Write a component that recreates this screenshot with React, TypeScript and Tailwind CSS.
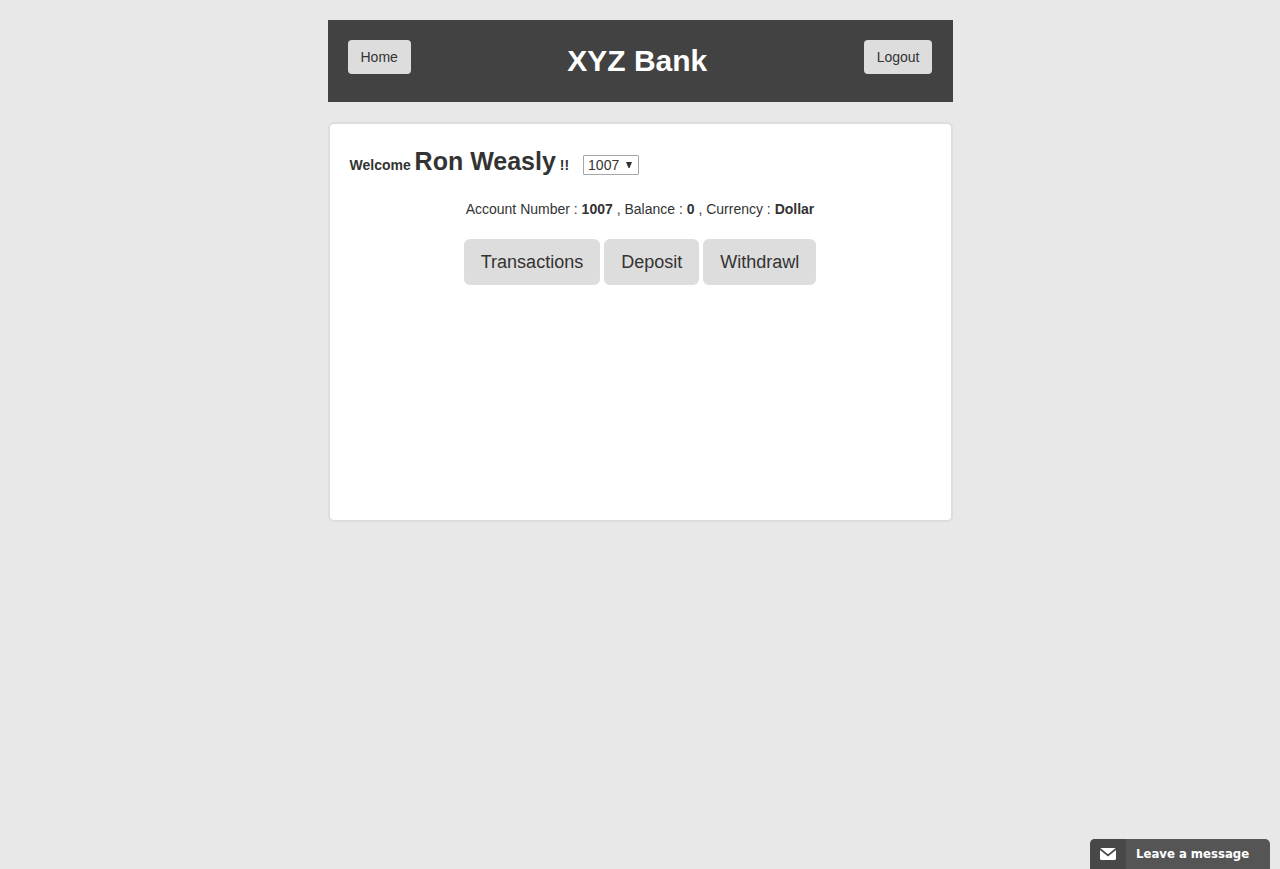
const actions = ['Transactions', 'Deposit', 'Withdrawl'];

function Header() {
  return (
    <header className="flex items-start justify-between bg-[#424242] p-5">
      <button type="button" className="h-[34px] rounded-sm bg-[#ddd] px-[13px] text-sm">
        Home
      </button>
      <h1 className="text-[30px] leading-[42px] font-bold text-white">XYZ Bank</h1>
      <button type="button" className="h-[34px] rounded-sm bg-[#ddd] px-[13px] text-sm">
        Logout
      </button>
    </header>
  );
}

function AccountSelect() {
  return (
    <span className="relative ml-[14px] inline-flex items-center">
      <select
        aria-label="Account number"
        defaultValue="1007"
        className="h-5 w-14 appearance-none rounded-[1px] border border-[#a6a6a6] bg-white pl-1 text-sm leading-4"
      >
        <option>1007</option>
        <option>1008</option>
        <option>1009</option>
      </select>
      <svg
        viewBox="0 0 6 6"
        className="pointer-events-none absolute right-[7px] h-1.5 w-1.5 fill-[#333]"
        aria-hidden="true"
      >
        <path d="M0 0h6L3.5 6h-1z" />
      </svg>
    </span>
  );
}

function Account() {
  return (
    <main className="mt-5 min-h-[400px] rounded-md border-2 border-[#ddd] bg-white p-5 text-sm">
      <div className="flex h-[34px] items-baseline font-bold">
        <p className="leading-[34px]">
          Welcome <span className="text-[25px]">Ron Weasly</span> !!
        </p>
        <span className="font-normal">
          <AccountSelect />
        </span>
      </div>
      <p className="mt-[21px] text-center leading-5">
        Account Number : <strong>1007</strong> , Balance : <strong>0</strong> , Currency :{' '}
        <strong>Dollar</strong>
      </p>
      <div className="mt-5 flex flex-wrap justify-center gap-1">
        {actions.map((label) => (
          <button
            key={label}
            type="button"
            className="h-[46px] rounded-md bg-[#ddd] px-[17px] text-lg"
          >
            {label}
          </button>
        ))}
      </div>
    </main>
  );
}

function MessageButton() {
  return (
    <button
      type="button"
      className="fixed right-2.5 bottom-0 flex h-[30px] w-[180px] items-center overflow-hidden rounded-t-[5px] bg-[#555] text-white"
    >
      <span className="flex h-full w-9 items-center justify-center bg-[#484848]">
        <svg viewBox="0 0 16 12" className="h-3 w-4" aria-hidden="true">
          <rect width="16" height="12" rx="1.5" fill="#fff" />
          <path d="M0 0.9L8 7.4L16 0.9" fill="none" stroke="#484848" strokeWidth="1.8" />
        </svg>
      </span>
      <span className="pl-2.5 font-['DejaVu_Sans_Condensed','DejaVu_Sans',sans-serif] text-[13px] font-bold">
        Leave a message
      </span>
    </button>
  );
}

export default function App() {
  return (
    <div className="min-h-screen bg-[#e8e8e8] pt-5 font-['Liberation_Sans',Arial,sans-serif] text-[#333]">
      <div className="mx-auto max-w-[625px]">
        <Header />
        <Account />
      </div>
      <MessageButton />
    </div>
  );
}
